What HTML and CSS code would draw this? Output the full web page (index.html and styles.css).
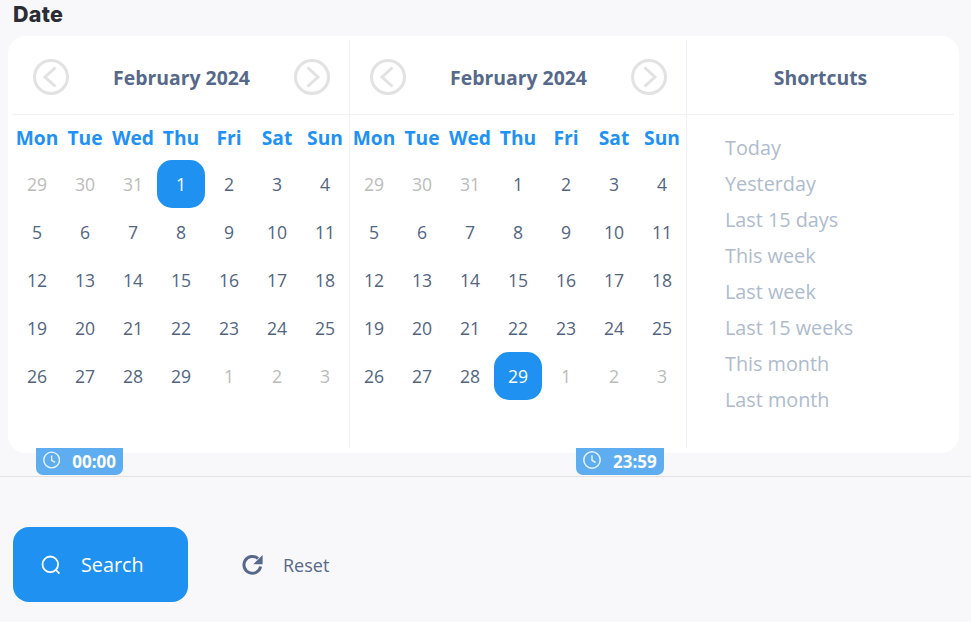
FILE: index.html
```html
<!DOCTYPE html>
<html lang="en">
<head>
<meta charset="utf-8">
<title>Date</title>
<link rel="stylesheet" href="styles.css">
</head>
<body>
<h2 class="title">Date</h2>
<div class="card">
  <section class="cal">
    <header class="cal-head">
      <svg class="nav" viewBox="0 0 36 36"><circle cx="18" cy="18" r="16.5"/><path d="M22.5 8.5 12 18l10.5 9.5"/></svg>
      <span class="month">February 2024</span>
      <svg class="nav" viewBox="0 0 36 36"><circle cx="18" cy="18" r="16.5"/><path d="M13.5 8.5 24 18l-10.5 9.5"/></svg>
    </header>
    <div class="grid">
      <b>Mon</b><b>Tue</b><b>Wed</b><b>Thu</b><b>Fri</b><b>Sat</b><b>Sun</b>
      <i>29</i><i>30</i><i>31</i><span class="sel">1</span><span>2</span><span>3</span><span>4</span>
      <span>5</span><span>6</span><span>7</span><span>8</span><span>9</span><span>10</span><span>11</span>
      <span>12</span><span>13</span><span>14</span><span>15</span><span>16</span><span>17</span><span>18</span>
      <span>19</span><span>20</span><span>21</span><span>22</span><span>23</span><span>24</span><span>25</span>
      <span>26</span><span>27</span><span>28</span><span>29</span><i>1</i><i>2</i><i>3</i>
    </div>
  </section>
  <section class="cal">
    <header class="cal-head">
      <svg class="nav" viewBox="0 0 36 36"><circle cx="18" cy="18" r="16.5"/><path d="M22.5 8.5 12 18l10.5 9.5"/></svg>
      <span class="month">February 2024</span>
      <svg class="nav" viewBox="0 0 36 36"><circle cx="18" cy="18" r="16.5"/><path d="M13.5 8.5 24 18l-10.5 9.5"/></svg>
    </header>
    <div class="grid">
      <b>Mon</b><b>Tue</b><b>Wed</b><b>Thu</b><b>Fri</b><b>Sat</b><b>Sun</b>
      <i>29</i><i>30</i><i>31</i><span>1</span><span>2</span><span>3</span><span>4</span>
      <span>5</span><span>6</span><span>7</span><span>8</span><span>9</span><span>10</span><span>11</span>
      <span>12</span><span>13</span><span>14</span><span>15</span><span>16</span><span>17</span><span>18</span>
      <span>19</span><span>20</span><span>21</span><span>22</span><span>23</span><span>24</span><span>25</span>
      <span>26</span><span>27</span><span>28</span><span class="sel">29</span><i>1</i><i>2</i><i>3</i>
    </div>
  </section>
  <aside class="shortcuts">
    <header class="short-head">Shortcuts</header>
    <ul class="short-list">
      <li>Today</li><li>Yesterday</li><li>Last 15 days</li><li>This week</li>
      <li>Last week</li><li>Last 15 weeks</li><li>This month</li><li>Last month</li>
    </ul>
  </aside>
</div>
<div class="times">
  <div class="time time-a"><svg viewBox="0 0 18 18"><circle cx="9" cy="9" r="8.2"/><path d="M9 4.2V9.3l3.6 2.2"/></svg><span>00:00</span></div>
  <div class="time time-b"><svg viewBox="0 0 18 18"><circle cx="9" cy="9" r="8.2"/><path d="M9 4.2V9.3l3.6 2.2"/></svg><span>23:59</span></div>
</div>
<div class="actions">
  <button class="btn-search"><svg viewBox="0 0 20 20"><circle cx="9.3" cy="9.3" r="7.8"/><path d="m15 15 3.4 3.6"/></svg>Search</button>
  <button class="btn-reset"><svg viewBox="0 0 22 22"><path d="M18.6 12.5A8.4 8.4 0 1 1 16 4.6"/><path class="fill" d="M20.6 1v9.2h-9.2z"/></svg>Reset</button>
</div>
</body>
</html>
```
FILE: styles.css
```css
* { box-sizing: border-box; }
html, body { margin: 0; height: 622px; overflow: hidden; }
body { background: #f8f8fb; font-family: "Open Sans", sans-serif; color: #526580; }
.title { margin: 0; padding: 2px 0 0 13px; height: 36px; font: 800 21.5px/24px Inter, sans-serif; letter-spacing: .3px; color: #2c2c34; }
.card { margin-left: 8px; width: 951px; height: 417px; padding: 4px 5px 5px; background: #fff; border-radius: 18px; display: flex; }
.cal { width: 337px; border-right: 1px solid #f1f2f9; }
.cal-head { height: 75px; margin-right: -1px; display: flex; align-items: center; justify-content: space-between; padding: 0 20px; border-bottom: 1px solid #f1f2f9; }
.nav { width: 36px; height: 36px; fill: none; stroke: #e2e2e2; stroke-width: 3; }
.month { font-size: 19.4px; font-weight: 700; line-height: 26px; padding-top: 2px; color: #56698a; }
.grid { display: grid; grid-template-columns: repeat(7, 48px); grid-template-rows: 45px repeat(5, 48px); }
.grid > * { display: flex; align-items: center; justify-content: center; font-style: normal; font-size: 17.6px; }
.grid b { font-size: 19.2px; font-weight: 700; color: #2191f3; }
.grid i { color: #bbbbbb; }
.grid .sel { background: #1f91f1; color: #fff; border-radius: 15px; }
.shortcuts { flex: 1; }
.short-head { height: 75px; display: flex; align-items: center; justify-content: center; border-bottom: 1px solid #f1f2f9; font-size: 19.4px; font-weight: 700; color: #56698a; }
.short-list { list-style: none; margin: 0; padding: 15px 0 0 38px; }
.short-list li { height: 36px; font-size: 19.8px; line-height: 36px; color: #aebbce; }
.times { display: flex; height: 29px; margin-top: -5px; padding-left: 36px; border-bottom: 1px solid #e3e3e6; }
.time { height: 27px; display: flex; align-items: center; background: #5eadf0; border-radius: 0 0 7px 7px; color: #fff; font-size: 17px; font-weight: 700; padding: 0 7px; gap: 12px; }
.time svg { width: 18px; height: 18px; margin-top: -3px; fill: none; stroke: #fff; stroke-width: 1.5; opacity: .85; }
.time-a { width: 87px; }
.time-b { width: 88px; margin-left: 453px; }
.actions { display: flex; align-items: center; padding: 50px 0 0 13px; }
button { border: 0; background: none; font-family: inherit; display: flex; align-items: center; padding: 0; }
.btn-search { width: 175px; height: 75px; padding-left: 28px; gap: 20px; background: #1f91f1; border-radius: 16px; color: #fff; font-size: 19.8px; font-weight: 500; }
.btn-search svg { width: 20px; height: 20px; fill: none; stroke: #fff; stroke-width: 1.8; }
.btn-reset { margin-left: 54px; gap: 19px; color: #56698a; font-size: 18px; }
.btn-reset svg { width: 22px; height: 22px; fill: none; stroke: #56698a; stroke-width: 3; }
.btn-reset .fill { fill: #56698a; stroke: none; }
```
